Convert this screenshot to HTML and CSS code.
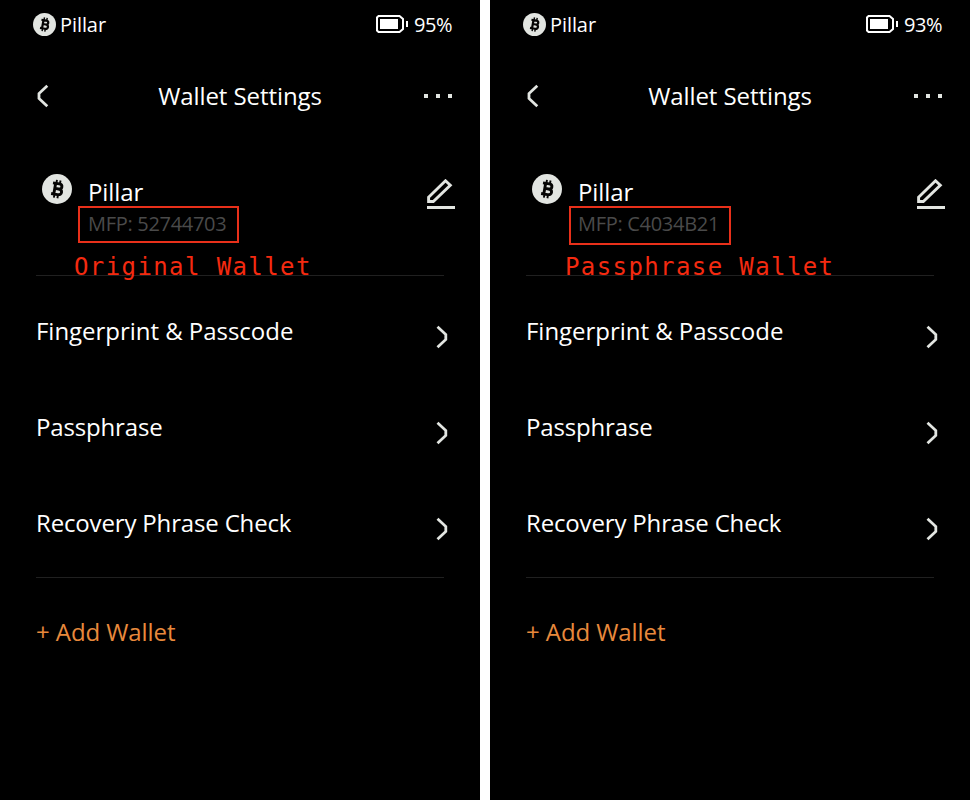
FILE: index.html
```html
<!DOCTYPE html>
<html lang="en">
<head>
<meta charset="utf-8">
<title>Wallet Settings</title>
<link rel="stylesheet" href="styles.css">
</head>
<body>
<svg class="defs" width="0" height="0" aria-hidden="true">
  <symbol id="coin" viewBox="0 0 30 30">
    <circle cx="15" cy="15" r="15" fill="#e2e5e1"/>
    <g fill="none" stroke="#050505" stroke-width="2.9" transform="translate(15 15) rotate(10)">
      <path d="M-5-5.4H1.5C5.4-5.4 5.4-.3 1.5-.3H-2M1.5-.3C6.2-.3 6.2 5.4 1.5 5.4H-5M-2.3-5.4V5.4"/>
      <path stroke-width="1.9" d="M-1.6-9V-5.4M2-9V-5.4M-1.6 5.4V9M2 5.4V9"/>
    </g>
  </symbol>
  <symbol id="battery" viewBox="0 0 32 18">
    <path fill="none" stroke="#fff" stroke-width="2" d="M2.5 1H23.5L27 4V14L23.5 17H2.5L1 15.5V2.5Z"/>
    <path fill="#fff" d="M4 4H22V14H4ZM30 6H32V12H30Z"/>
  </symbol>
  <symbol id="back" viewBox="0 0 12 24">
    <path fill="none" stroke="#e2e5e1" stroke-width="2.8" d="M10.3 1.8L2 9.5V14.5L10.3 22.2"/>
  </symbol>
  <symbol id="next" viewBox="0 0 12 24">
    <path fill="none" stroke="#e2e5e1" stroke-width="2.8" d="M1.5 1.8L9.8 9.5V14.5L1.5 22.2"/>
  </symbol>
  <symbol id="edit" viewBox="0 0 28 30">
    <path fill="none" stroke="#e2e5e1" stroke-width="2.9" d="M1.6 18.2L18.5 1.8L23.3 6.2L6.3 22.5H1.6Z"/>
    <path fill="#e2e5e1" d="M0 27H28V30H0Z"/>
  </symbol>
</svg>
<main class="comparison">
  <section class="device">
    <div class="status"><svg class="status-coin"><use href="#coin"/></svg><span>Pillar</span><svg class="battery"><use href="#battery"/></svg><span class="percent">95%</span></div>
    <header class="header"><svg class="chevron"><use href="#back"/></svg><h1>Wallet Settings</h1><div class="more"><i></i><i></i><i></i></div></header>
    <div class="wallet">
      <svg class="coin"><use href="#coin"/></svg>
      <div class="identity"><div class="name">Pillar</div><div class="mfp">MFP: 52744703</div></div>
      <svg class="edit"><use href="#edit"/></svg>
      <div class="outline"></div><div class="note">Original Wallet</div>
    </div>
    <nav class="menu">
      <div class="row"><span>Fingerprint &amp; Passcode</span><svg class="chevron"><use href="#next"/></svg></div>
      <div class="row"><span>Passphrase</span><svg class="chevron"><use href="#next"/></svg></div>
      <div class="row"><span>Recovery Phrase Check</span><svg class="chevron"><use href="#next"/></svg></div>
    </nav>
    <div class="add">+ Add Wallet</div>
  </section>
  <section class="device passphrase">
    <div class="status"><svg class="status-coin"><use href="#coin"/></svg><span>Pillar</span><svg class="battery"><use href="#battery"/></svg><span class="percent">93%</span></div>
    <header class="header"><svg class="chevron"><use href="#back"/></svg><h1>Wallet Settings</h1><div class="more"><i></i><i></i><i></i></div></header>
    <div class="wallet">
      <svg class="coin"><use href="#coin"/></svg>
      <div class="identity"><div class="name">Pillar</div><div class="mfp">MFP: C4034B21</div></div>
      <svg class="edit"><use href="#edit"/></svg>
      <div class="outline"></div><div class="note">Passphrase Wallet</div>
    </div>
    <nav class="menu">
      <div class="row"><span>Fingerprint &amp; Passcode</span><svg class="chevron"><use href="#next"/></svg></div>
      <div class="row"><span>Passphrase</span><svg class="chevron"><use href="#next"/></svg></div>
      <div class="row"><span>Recovery Phrase Check</span><svg class="chevron"><use href="#next"/></svg></div>
    </nav>
    <div class="add">+ Add Wallet</div>
  </section>
</main>
</body>
</html>
```
FILE: styles.css
```css
* { box-sizing: border-box; }
body { margin: 0; background: #fff; color: #fff; font: 24px/32px "Open Sans", sans-serif; letter-spacing: -.08px; }
svg { display: block; flex: none; }
.defs { position: absolute; }
.comparison { display: grid; grid-template-columns: 480px 480px; gap: 10px; height: 800px; }
.device { background: #000; overflow: hidden; }
.status { display: flex; align-items: center; height: 48px; padding: 0 28px 0 33px; font-size: 20px; }
.status span { padding-top: 2px; }
.status-coin { width: 23px; height: 23px; margin-right: 4px; }
.battery { width: 32px; height: 18px; margin-left: auto; margin-right: 6px; }
.percent { width: 38px; letter-spacing: -.45px; }
.header { display: grid; grid-template-columns: 60px 1fr 69px; align-items: center; height: 96px; padding: 0 28px 0 37px; }
.chevron { width: 12px; height: 24px; }
h1 { margin: 0; font-size: 24px; font-weight: 400; text-align: center; white-space: nowrap; }
.more { display: flex; gap: 8px; justify-self: end; }
.more i { width: 4px; height: 4px; background: #e2e5e1; }
.wallet { position: relative; display: flex; height: 132px; margin: 0 36px; padding: 30px 0 0 6px; border-bottom: 1px solid #202020; }
.coin { width: 30px; height: 30px; }
.identity { margin-left: 16px; padding-top: 2px; }
.mfp { color: #4a4a4a; font-size: 20px; letter-spacing: -.3px; }
.edit { width: 28px; height: 30px; margin: 5px -11px 0 auto; }
.outline { position: absolute; left: 42px; top: 62px; width: 161px; height: 37px; border: 2px solid #e8301a; }
.note { position: absolute; left: 38px; top: 107px; color: #f42a10; font-family: "DejaVu Sans Mono", monospace; letter-spacing: 1.4px; white-space: nowrap; }
.passphrase .outline { left: 43px; width: 162px; height: 39px; }
.passphrase .note { left: 39px; }
.menu { margin: 0 36px; height: 302px; padding-top: 7px; border-bottom: 1px solid #202020; }
.row { display: flex; justify-content: space-between; align-items: center; height: 96px; margin-right: -4px; letter-spacing: -.03px; }
.row:nth-child(n+2) { letter-spacing: -.16px; }
.row .chevron { margin-top: 12px; }
.add { padding: 38px 36px 0; color: #e8893c; }
```
